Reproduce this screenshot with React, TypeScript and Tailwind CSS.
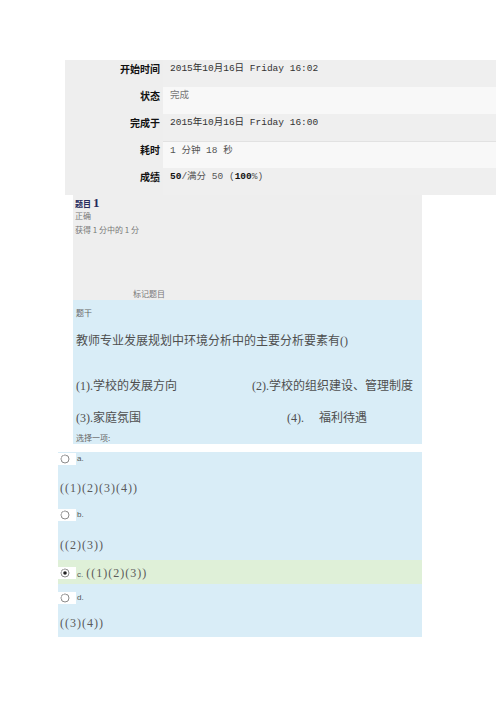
const mono = "font-['Liberation_Mono','Noto_Sans_CJK_SC',monospace]";
const cjk = "font-['Noto_Sans_CJK_SC',sans-serif]";
const serif = "font-['Liberation_Serif','Noto_Sans_CJK_SC',serif]";

const rows = [
  { label: "开始时间", value: <span className="text-[#333]">2015年10月16日 Friday 16:02</span>, light: false },
  { label: "状态", value: <span className="text-[#777]">完成</span>, light: true },
  { label: "完成于", value: <span className="text-[#333]">2015年10月16日 Friday 16:00</span>, light: false },
  { label: "耗时", value: <span className="text-[#555]">1 分钟 18 秒</span>, light: true, border: true },
  {
    label: "成绩",
    value: (
      <span className="text-[#555]">
        <b className="text-[#111]">50</b>/满分 50 (<b className="text-[#111]">100</b>%)
      </span>
    ),
    light: false,
  },
];

const Radio = ({ checked }: { checked?: boolean }) => (
  <div className="flex h-[12px] w-[18px] items-center bg-white pl-[2px]">
    <svg width="10" height="10" viewBox="0 0 10 10">
      <circle cx="5" cy="5" r="4" fill="#fff" stroke="#8a8a8a" strokeWidth="1" />
      <path d="M2 6.5 A3.2 3.2 0 0 1 6.5 2" fill="none" stroke="#c8c8c8" strokeWidth="0.8" />
      {checked && <circle cx="5" cy="5" r="1.8" fill="#222" />}
    </svg>
  </div>
);

const answerText = `${serif} text-[12px] tracking-[1px] text-[#5a5a5a]`;
const letter = "font-['Liberation_Sans',sans-serif] text-[8px] text-[#555]";

export default function App() {
  return (
    <div className="min-h-[702px] w-[496px] bg-white pt-[60px]">
      {/* summary */}
      <div className="ml-[65px] flex flex-col bg-[#eeeeee]">
        {rows.map((r) => (
          <div key={r.label} className="flex h-[27px]">
            <div className={`w-[98px] pr-[3px] pt-[4px] text-right text-[10px] font-bold leading-[10px] text-[#111] ${cjk}`}>
              {r.label}
            </div>
            <div
              className={`flex-1 pl-[7px] pt-[4px] text-[9.5px] leading-[10px] ${mono} ${
                r.light ? "bg-[#f8f8f8]" : "bg-[#efefef]"
              } ${r.border ? "border-t border-[#e2e2e2]" : ""}`}
            >
              {r.value}
            </div>
          </div>
        ))}
      </div>

      {/* question info */}
      <div className="ml-[73px] w-[349px]">
        <div className={`h-[105px] bg-[#eeeeee] pl-[2px] pt-[1px] ${cjk}`}>
          <div className="flex items-end gap-[2px] leading-[14px] text-[#262a5c]">
            <span className="text-[8px] font-bold leading-[12px]">题目</span>
            <span className="font-['Liberation_Serif',serif] text-[13px] font-bold">1</span>
          </div>
          <div className="mt-[1px] text-[8px] leading-[10px] text-[#777]">正确</div>
          <div className="mt-[4px] text-[8px] leading-[10px] text-[#777]">获得 1 分中的 1 分</div>
          <div className="ml-[58px] mt-[54px] text-[8px] leading-[10px] text-[#777]">标记题目</div>
        </div>

        <div className={`h-[144px] whitespace-nowrap bg-[#d9edf7] pl-[3px] pt-[8px] text-[#4f4f4f] ${serif}`}>
          <div className={`text-[8px] leading-[10px] text-[#666] ${cjk}`}>题干</div>
          <div className="mt-[15px] text-[12px] leading-[16px]">教师专业发展规划中环境分析中的主要分析要素有()</div>
          <div className="mt-[29px] flex text-[12px] leading-[16px]">
            <span className="w-[176px]">(1).学校的发展方向</span>
            <span>(2).学校的组织建设、管理制度</span>
          </div>
          <div className="mt-[16px] flex text-[12px] leading-[16px]">
            <span className="w-[211px]">(3).家庭氛围</span>
            <span>(4).</span>
            <span className="ml-[15px]">福利待遇</span>
          </div>
          <div className={`mt-[7px] text-[8px] leading-[10px] text-[#666] ${cjk}`}>选择一项:</div>
        </div>
      </div>

      {/* answers */}
      <div className="ml-[58px] mt-[8px] w-[364px] bg-[#d9edf7]">
        <div className="h-[56px] pt-[1px]">
          <div className="flex items-end">
            <Radio />
            <span className={`ml-[1px] leading-[12px] ${letter}`}>a.</span>
          </div>
          <div className={`ml-[2px] mt-[15px] leading-[16px] ${answerText}`}>((1)(2)(3)(4))</div>
        </div>
        <div className="h-[52px] pt-[1px]">
          <div className="flex items-end">
            <Radio />
            <span className={`ml-[1px] leading-[12px] ${letter}`}>b.</span>
          </div>
          <div className={`ml-[2px] mt-[16px] leading-[16px] ${answerText}`}>((2)(3))</div>
        </div>
        <div className="flex h-[24px] items-center bg-[#dff0d8] pt-[2px]">
          <Radio checked />
          <span className={`ml-[1px] mt-[3px] ${letter}`}>c.</span>
          <span className={`ml-[3px] leading-[16px] ${answerText}`}>((1)(2)(3))</span>
        </div>
        <div className="h-[53px] pt-[8px]">
          <div className="flex items-end">
            <Radio />
            <span className={`ml-[1px] leading-[12px] ${letter}`}>d.</span>
          </div>
          <div className={`ml-[2px] mt-[11px] leading-[16px] ${answerText}`}>((3)(4))</div>
        </div>
      </div>
    </div>
  );
}
